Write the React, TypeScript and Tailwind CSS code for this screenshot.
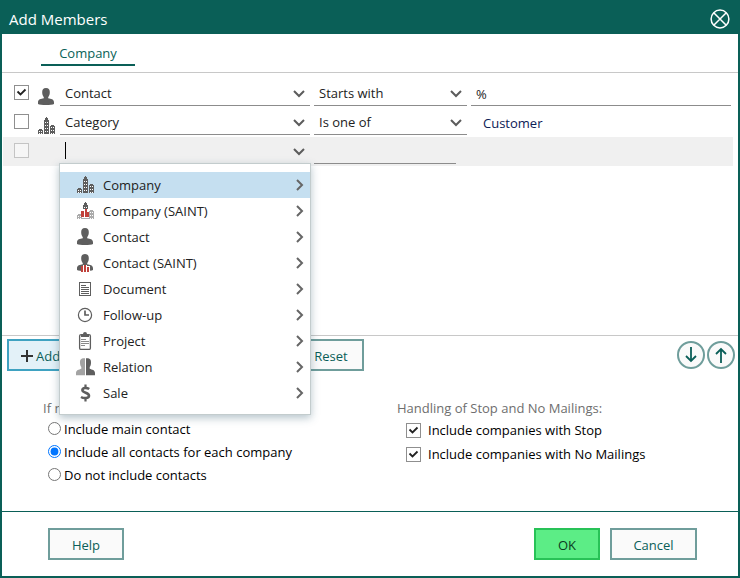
import { useState, type ReactNode } from "react";

const GRAY = "#5e5e5e";

function BuildingsIcon({ saint = false }: { saint?: boolean }) {
  const side = saint ? "#ababab" : GRAY;
  return (
    <svg width="18" height="18" viewBox="0 0 18 18" shapeRendering="crispEdges" aria-hidden="true">
      <path fill={side} d="M0 17v-4h1v-1h3v1h1v4zM12 17V9h1V8h3v1h1v8z" />
      <path fill={GRAY} d="M6 17V3h1V1h1V0h1v1h1v2h1v14z" />
      <g fill="#fff">
        <path d="M1 14h1v1H1zM3 14h1v1H3zM1 16h1v1H1zM3 16h1v1H3z" />
        <path d="M7 5h1v1H7zM9 5h1v1H9zM7 8h1v1H7zM9 8h1v1H9zM7 11h1v1H7zM9 11h1v1H9zM7 14h1v1H7zM9 14h1v1H9z" />
        <path d="M13 10h1v1h-1zM15 10h1v1h-1zM13 13h1v1h-1zM15 13h1v1h-1zM13 16h1v1h-1zM15 16h1v1h-1z" />
      </g>
      {saint && (
        <>
          <path fill="#fff" d="M6 7h5v10H6z" />
          <path fill="#c0413b" d="M4 9h3v6H4zM8 7h2v8H8zM10 10h2v5h-2z" />
          <path fill={side} d="M5 16h7v1H5z" />
        </>
      )}
    </svg>
  );
}

const PERSON =
  "M8 0C5.200 0 4 2 4.200 4.800C4.300 6.800 5 8.200 5.800 9.200V10.300C3 10.900 0 11.200 0 14.500V16C2 17.300 14 17.300 16 16V14.500C16 11.200 13 10.900 10.200 10.300V9.200C11 8.200 11.700 6.800 11.800 4.800C12 2 10.800 0 8 0Z";

function PersonIcon({ saint = false }: { saint?: boolean }) {
  return (
    <svg width="18" height="18" viewBox="0 0 18 18" aria-hidden="true">
      <path fill={GRAY} d={PERSON} />
      {saint && (
        <>
          <path fill="#fff" shapeRendering="crispEdges" d="M4 18v-6h2v-1h4v1h3v6z" />
          <path fill="#c0413b" shapeRendering="crispEdges" d="M4 12h2v6H4zM7 11h2v7H7zM10 13h2v5h-2z" />
        </>
      )}
    </svg>
  );
}

function DocumentIcon() {
  return (
    <svg width="18" height="18" viewBox="0 0 18 18" shapeRendering="crispEdges" aria-hidden="true">
      <path fill="none" stroke={GRAY} d="M2.500 2.500h11v13h-11z" />
      <path stroke={GRAY} d="M4 5.500h5M4 7.500h8M4 9.500h8M4 11.500h8M4 13.500h8" />
    </svg>
  );
}

function ClockIcon() {
  return (
    <svg width="18" height="18" viewBox="0 0 18 18" fill="none" stroke={GRAY} aria-hidden="true">
      <circle cx="8" cy="9" r="6.600" strokeWidth="1.200" />
      <path strokeWidth="1.700" d="M8 4.500V9h4" />
    </svg>
  );
}

function ClipboardIcon() {
  return (
    <svg width="18" height="18" viewBox="0 0 18 18" aria-hidden="true">
      <rect x="2.600" y="2.600" width="10.800" height="14.800" rx="1.500" fill="none" stroke={GRAY} strokeWidth="1.300" />
      <path fill={GRAY} d="M4 5V2h2a2 2 0 0 1 4 0h2v3z" />
      <path stroke="#8a8a8a" d="M4 7.500h5M4 9.500h8M4 11.500h8M4 13.500h4" />
    </svg>
  );
}

function RelationIcon() {
  return (
    <svg className="-ml-px" width="20" height="18" viewBox="0 0 20 18" aria-hidden="true">
      <path fill="#a3a3a3" d="M9 0.300C5 0 3.800 1.500 4 5c.1 2 .6 3.300 1.300 4v1.800C3 11.800 0 12 0 15v2.200h9z" />
      <path fill={GRAY} d="M10 0.300c4-.3 5.200 1.200 5 4.700-.1 2-.6 3.300-1.300 4v1.800c2.300 1 5.300 1.200 5.300 4.200v2.200h-9z" />
    </svg>
  );
}

function DollarIcon() {
  return (
    <svg width="18" height="18" viewBox="0 0 18 18" fill="none" stroke={GRAY} aria-hidden="true">
      <path strokeWidth="2.600" d="M12.200 5C10.500 3.800 5.400 3.200 5.400 6.100C5.400 9.200 12 8.400 12 11.700C12 14.800 6.200 14.300 4 13" />
      <path strokeWidth="2.200" d="M8.500 0.500v3M8.500 14.500v3" />
    </svg>
  );
}

function Chevron({ right = false }: { right?: boolean }) {
  return right ? (
    <svg width="8" height="12" viewBox="0 0 8 12" fill="none" stroke="#666" strokeWidth="2" aria-hidden="true">
      <path d="M1 1l5 5-5 5" />
    </svg>
  ) : (
    <svg className="pointer-events-none col-start-1 row-start-1 mt-[3px] mr-[5px] self-center justify-self-end" width="12" height="8" viewBox="0 0 12 8" fill="none" stroke="#5c5c5c" strokeWidth="2" aria-hidden="true">
      <path d="M1 1l5 5 5-5" />
    </svg>
  );
}

function CheckBox({ id, label, initial = false, disabled = false }: { id: string; label?: string; initial?: boolean; disabled?: boolean }) {
  const [checked, setChecked] = useState(initial);
  return (
    <span className="grid size-[15px] shrink-0">
      <input
        id={id}
        type="checkbox"
        aria-label={label}
        checked={checked}
        disabled={disabled}
        onChange={(e) => setChecked(e.target.checked)}
        className="col-start-1 row-start-1 size-[15px] appearance-none border border-[#8f8f8f] bg-white disabled:border-[#c4c4c4] disabled:bg-[#f6f6f6]"
      />
      {checked && (
        <svg className="pointer-events-none col-start-1 row-start-1" width="15" height="15" viewBox="0 0 15 15" fill="none" stroke="#222" strokeWidth="1.800" aria-hidden="true">
          <path d="M3.500 6.500l3 3 5-5" />
        </svg>
      )}
    </span>
  );
}

function Picker({ label, value, options }: { label: string; value: string; options: string[] }) {
  return (
    <span className="grid h-[27px] w-full border-b border-[#8c8c8c]">
      <select aria-label={label} defaultValue={value} className="col-start-1 row-start-1 appearance-none bg-transparent pt-[2px] pr-6 pl-[5px] outline-none">
        {options.map((o) => (
          <option key={o}>{o}</option>
        ))}
      </select>
      <Chevron />
    </span>
  );
}

const menu: { name: string; icon: ReactNode }[] = [
  { name: "Company", icon: <BuildingsIcon /> },
  { name: "Company (SAINT)", icon: <BuildingsIcon saint /> },
  { name: "Contact", icon: <PersonIcon /> },
  { name: "Contact (SAINT)", icon: <PersonIcon saint /> },
  { name: "Document", icon: <DocumentIcon /> },
  { name: "Follow-up", icon: <ClockIcon /> },
  { name: "Project", icon: <ClipboardIcon /> },
  { name: "Relation", icon: <RelationIcon /> },
  { name: "Sale", icon: <DollarIcon /> },
];

function FieldMenu() {
  return (
    <ul role="menu" className="absolute top-[26px] -left-px z-10 w-[252px] border border-[#c3cccd] bg-white py-2 shadow-[0_3px_8px_rgba(50,90,110,0.35)]">
      {menu.map((m, i) => (
        <li key={m.name} role="none">
          <button
            type="button"
            role="menuitem"
            className={`flex h-[26px] w-full items-center pr-[6px] pl-[17px] text-left ${i === 0 ? "bg-[#c5dff0]" : "bg-white"}`}
          >
            <span className="flex w-[26px] shrink-0">{m.icon}</span>
            <span className="flex-1">{m.name}</span>
            <Chevron right />
          </button>
        </li>
      ))}
    </ul>
  );
}

const rowGrid = "ml-px mr-[5px] grid h-[29px] grid-cols-[35px_22px_250px_153px_minmax(0,1fr)] items-start pr-[2px]";
const outlined = "h-8 border-2 border-[#6f9d9b] bg-[#fafafa] pt-[2px] text-[#0a5e58]";
const radios = ["Include main contact", "Include all contacts for each company", "Do not include contacts"];

export default function App() {
  const [choice, setChoice] = useState(1);
  return (
    <div className="flex min-h-screen flex-col border-2 border-t-0 border-[#0a5f57] bg-white font-['Open_Sans','Noto_Sans',sans-serif] text-[13px] leading-[18px] text-[#222]">
      <header className="flex h-[34px] items-center justify-between bg-[#0a5f57] pt-1 pr-2 pl-[7px] text-white">
        <h1 className="text-[15px]">Add Members</h1>
        <button type="button" aria-label="Close">
          <svg width="20" height="20" viewBox="0 0 20 20" fill="none" stroke="#fff" strokeWidth="1.500" aria-hidden="true">
            <circle cx="10" cy="10" r="8.900" />
            <path d="M4 4l12 12M16 4L4 16" />
          </svg>
        </button>
      </header>

      <nav role="tablist" className="flex h-[39px] items-start border-b border-[#c8c8c8] pl-[39px]">
        <button type="button" role="tab" aria-selected="true" className="mt-[10px] h-[22px] w-[94px] border-b-2 border-[#0a5f57] pb-[2px] text-[#0a5f57]">
          Company
        </button>
      </nav>

      <main className="flex-1 pt-[6px]">
        <div className={rowGrid}>
          <span className="pt-[6px] pl-[11px]">
            <CheckBox id="use-contact" label="Use Contact" initial />
          </span>
          <span className="pt-[9px]">
            <PersonIcon />
          </span>
          <Picker label="Field" value="Contact" options={["Contact", "Category"]} />
          <span className="ml-1 flex w-[153px]">
            <Picker label="Operator" value="Starts with" options={["Starts with", "Is one of"]} />
          </span>
          <input aria-label="Value" defaultValue="%" className="ml-2 h-[27px] border-b border-[#8c8c8c] bg-transparent pt-1 pl-[5px] outline-none" />
        </div>

        <div className={rowGrid}>
          <span className="pt-[6px] pl-[11px]">
            <CheckBox id="use-category" label="Use Category" />
          </span>
          <span className="pt-[9px]">
            <BuildingsIcon />
          </span>
          <Picker label="Field" value="Category" options={["Contact", "Category"]} />
          <span className="ml-1 flex w-[153px]">
            <Picker label="Operator" value="Is one of" options={["Starts with", "Is one of"]} />
          </span>
          <span className="ml-5 pt-[6px] text-[#0c2056]">Customer</span>
        </div>

        <div className={`${rowGrid} bg-[#f0f0f0]`}>
          <span className="pt-[6px] pl-[11px]">
            <CheckBox id="use-new" label="Use new criterion" disabled />
          </span>
          <span />
          <span className="relative grid h-[27px]">
            <input aria-label="New field" role="combobox" aria-expanded="true" className="col-start-1 row-start-1 w-full bg-transparent pl-[5px] outline-none" />
            <span className="pointer-events-none col-start-1 row-start-1 ml-[5px] h-[17px] w-px self-center bg-black" />
            <Chevron />
            <FieldMenu />
          </span>
          <span className="ml-1 h-[27px] w-[142px] border-b border-[#8c8c8c]" />
        </div>
      </main>

      <section className="border-t border-[#c8c8c8] pt-[3px]">
        <div className="flex justify-between pr-[3px] pl-[5px]">
          <div className="flex gap-[227px]">
            <button type="button" className="flex h-8 w-16 items-center gap-[3px] border-2 border-[#3fa2c1] bg-[#e3f1f8] pt-[2px] pl-3 text-[#0a5e58]">
              <svg width="12" height="12" viewBox="0 0 12 12" stroke="#333" strokeWidth="2" aria-hidden="true">
                <path d="M6 0v12M0 6h12" />
              </svg>
              Add
            </button>
            <button type="button" className={`${outlined} w-[66px]`}>
              Reset
            </button>
          </div>
          <div className="flex items-center gap-[2px]">
            {["M14 6v14M9 15l5 5 5-5", "M14 22V8M9 13l5-5 5 5"].map((d, i) => (
              <button key={d} type="button" aria-label={i === 0 ? "Move down" : "Move up"}>
                <svg width="28" height="28" viewBox="0 0 28 28" fill="none" stroke="#0a5e58" strokeWidth="1.800" aria-hidden="true">
                  <circle cx="14" cy="14" r="13" fill="#fafafa" stroke="#6f9d9b" strokeWidth="2" />
                  <path d={d} />
                </svg>
              </button>
            ))}
          </div>
        </div>

        <div className="grid grid-cols-[354px_minmax(0,1fr)] pt-7 pb-[25px] pl-[41px] text-black">
          <fieldset>
            <legend className="text-[#6e6e6e]">If n</legend>
            {radios.map((r, i) => (
              <label key={r} className="ml-[5px] flex h-[23px] items-center gap-[3px]">
                <input type="radio" name="contacts" checked={choice === i} onChange={() => setChoice(i)} className="size-[13px]" />
                {r}
              </label>
            ))}
          </fieldset>
          <fieldset>
            <legend className="text-[#6e6e6e]">Handling of Stop and No Mailings:</legend>
            {["Include companies with Stop", "Include companies with No Mailings"].map((t, i) => (
              <label key={t} htmlFor={`mail-${i}`} className="ml-[9px] flex h-6 items-center gap-[7px] pt-[2px]">
                <CheckBox id={`mail-${i}`} initial />
                {t}
              </label>
            ))}
          </fieldset>
        </div>
      </section>

      <footer className="flex items-center justify-between border-t border-[#0a5f57] py-4 pr-[41px] pl-[46px]">
        <button type="button" className={`${outlined} w-[76px]`}>
          Help
        </button>
        <div className="flex gap-[10px]">
          <button type="button" className="h-8 w-[66px] border-2 border-[#28c257] bg-[#5ced86] pt-[2px] text-[#0b3b22]">
            OK
          </button>
          <button type="button" className={`${outlined} w-[87px]`}>
            Cancel
          </button>
        </div>
      </footer>
    </div>
  );
}
